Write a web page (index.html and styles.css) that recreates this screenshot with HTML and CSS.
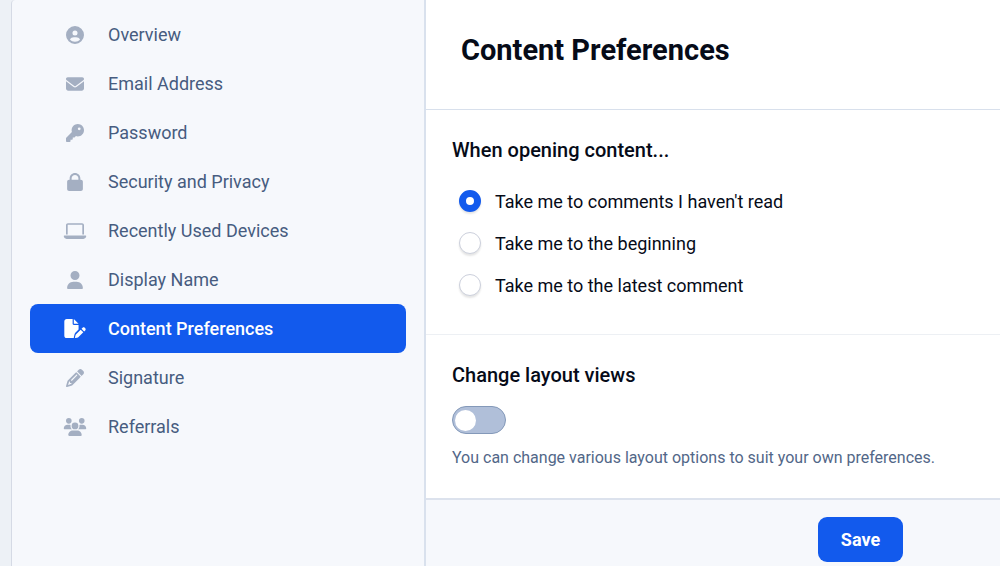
FILE: index.html
```html
<!DOCTYPE html>
<html lang="en">
<head>
<meta charset="utf-8">
<meta name="viewport" content="width=device-width, initial-scale=1">
<title>Content Preferences</title>
<link rel="stylesheet" href="styles.css">
</head>
<body>
<div class="settings">
  <nav class="sidebar" aria-label="Settings">
    <a class="nav-link" href="#overview"><svg class="icon" viewBox="0 0 512 512" aria-hidden="true"><path fill-rule="evenodd" d="M399 384.2C376.900 345.800 335.400 320 288 320H224c-47.400 0-88.900 25.800-111 64.200c35.200 39.200 86.200 63.800 143 63.800s107.800-24.700 143-63.800zM0 256a256 256 0 1 1 512 0A256 256 0 1 1 0 256zm256 16a72 72 0 1 0 0-144 72 72 0 1 0 0 144z"/></svg>Overview</a>
    <a class="nav-link" href="#email"><svg class="icon" viewBox="0 0 512 512" aria-hidden="true"><path d="M48 64C21.500 64 0 85.500 0 112c0 15.100 7.100 29.300 19.200 38.400L236.800 313.600c11.400 8.500 27 8.500 38.400 0L492.800 150.400c12.100-9.100 19.200-23.300 19.200-38.400c0-26.500-21.500-48-48-48H48zM0 176V384c0 35.300 28.700 64 64 64H448c35.300 0 64-28.700 64-64V176L294.400 339.200c-22.800 17.100-54 17.100-76.800 0L0 176z"/></svg>Email Address</a>
    <a class="nav-link" href="#password"><svg class="icon" viewBox="0 0 512 512" aria-hidden="true"><path fill-rule="evenodd" d="M336 352c97.200 0 176-78.800 176-176S433.200 0 336 0S160 78.800 160 176c0 18.700 2.900 36.800 8.300 53.700L7 391c-4.500 4.500-7 10.600-7 17v80c0 13.300 10.700 24 24 24h80c13.300 0 24-10.700 24-24V448h40c13.300 0 24-10.700 24-24V384h40c6.400 0 12.500-2.500 17-7l33.300-33.300c16.900 5.400 35 8.300 53.700 8.300zM376 96a40 40 0 1 1 0 80 40 40 0 1 1 0-80z"/></svg>Password</a>
    <a class="nav-link" href="#security"><svg class="icon" viewBox="0 0 448 512" aria-hidden="true"><path fill-rule="evenodd" d="M392 192h-16v-40C376 68.200 307.800 0 224 0S72 68.200 72 152v40H56c-30.900 0-56 25.100-56 56v208c0 30.900 25.100 56 56 56h336c30.900 0 56-25.100 56-56V248c0-30.900-25.100-56-56-56zm-72 0H128v-40c0-53 43-96 96-96s96 43 96 96v40z"/></svg>Security and Privacy</a>
    <a class="nav-link" href="#devices"><svg class="icon" viewBox="0 0 640 512" aria-hidden="true"><path d="M120 32C89 32 64 57 64 88V352h48V88c0-4 4-8 8-8H520c4 0 8 4 8 8V352h48V88c0-31-25-56-56-56H120zM16 384C7 384 0 391 0 400C0 444 36 480 80 480H560c44 0 80-36 80-80c0-9-7-16-16-16H16z"/></svg>Recently Used Devices</a>
    <a class="nav-link" href="#name"><svg class="icon" viewBox="0 0 448 512" aria-hidden="true"><path d="M224 256A128 128 0 1 0 224 0a128 128 0 1 0 0 256zm-45.700 48C79.800 304 0 383.800 0 482.300C0 498.700 13.300 512 29.700 512H418.300c16.400 0 29.700-13.300 29.700-29.700C448 383.800 368.200 304 269.700 304H178.300z"/></svg>Display Name</a>
    <a class="nav-link nav-link-active" href="#content" aria-current="page"><svg class="icon" viewBox="0 0 576 512" aria-hidden="true"><path d="M0 64C0 28.700 28.700 0 64 0H224V128c0 17.700 14.300 32 32 32H384V285.700l-86.800 86.800c-10.300 10.300-17.500 23.100-21 37.200l-18.700 74.900c-2.300 9.200-1.800 18.800 1.300 27.500H64c-35.300 0-64-28.700-64-64V64zm384 64H256V0L384 128zM549.800 235.700l14.400 14.400c15.600 15.600 15.600 40.900 0 56.600l-29.400 29.400-71-71 29.400-29.400c15.600-15.600 40.900-15.600 56.600 0zM311.900 417L441.100 287.800l71 71L382.900 487.900c-4.100 4.100-9.200 7-14.900 8.400l-60.100 15c-5.500 1.400-11.200-.2-15.200-4.200s-5.600-9.700-4.200-15.200l15-60.100c1.400-5.600 4.300-10.800 8.400-14.900z"/></svg>Content Preferences</a>
    <a class="nav-link" href="#signature"><svg class="icon" viewBox="0 0 512 512" aria-hidden="true"><path fill-rule="evenodd" d="M410.300 231l11.300-11.300-33.900-33.900-62.100-62.100L291.700 89.800l-11.300 11.300-22.600 22.600L58.600 322.900c-10.400 10.400-18 23.300-22.200 37.400L1 480.700c-2.500 8.400-.2 17.500 6.100 23.700s15.300 8.500 23.700 6.100l120.300-35.400c14.100-4.200 27-11.800 37.400-22.200L387.700 253.700 410.300 231zM160 399.400l-9.100 22.700c-4 3.100-8.500 5.400-13.300 6.900L59.400 452l23-78.100c1.400-4.900 3.800-9.400 6.900-13.300l22.700-9.100v32c0 8.800 7.200 16 16 16h32zM362.700 18.700L348.300 33.200 325.700 55.800 314.300 67.100l33.900 33.900 62.100 62.100 33.900 33.900 11.300-11.300 22.600-22.600 14.500-14.500c25-25 25-65.500 0-90.500L453.300 18.700c-25-25-65.500-25-90.500 0zm-47.400 168l-144 144c-6.200 6.200-16.400 6.200-22.600 0s-6.200-16.400 0-22.600l144-144c6.200-6.200 16.400-6.200 22.600 0s6.200 16.400 0 22.600z"/></svg>Signature</a>
    <a class="nav-link" href="#referrals"><svg class="icon" viewBox="0 0 640 512" aria-hidden="true"><path d="M144 0a80 80 0 1 1 0 160A80 80 0 1 1 144 0zM512 0a80 80 0 1 1 0 160A80 80 0 1 1 512 0zM0 298.700C0 239.800 47.800 192 106.700 192h42.700c15.900 0 31 3.500 44.600 9.700c-1.300 7.200-1.900 14.700-1.900 22.300c0 38.200 16.800 72.500 43.300 96H21.300C9.600 320 0 310.400 0 298.700zM404.600 320c26.600-23.500 43.300-57.800 43.300-96c0-7.600-.7-15-1.900-22.300c13.600-6.300 28.700-9.700 44.600-9.700h42.700C592.200 192 640 239.800 640 298.700c0 11.800-9.600 21.300-21.300 21.300H404.600zM224 224a96 96 0 1 1 192 0 96 96 0 1 1-192 0zM128 485.300C128 411.700 187.700 352 261.300 352H378.700C452.300 352 512 411.700 512 485.300c0 14.700-11.900 26.700-26.700 26.700H154.700c-14.700 0-26.700-11.900-26.700-26.700z"/></svg>Referrals</a>
  </nav>
  <main class="panel">
    <header class="panel-header"><h1 class="title">Content Preferences</h1></header>
    <form class="form">
      <fieldset class="section opening">
        <legend class="heading">When opening content...</legend>
        <div class="options">
          <label class="option"><input class="radio" type="radio" name="opening" checked>Take me to comments I haven't read</label>
          <label class="option"><input class="radio" type="radio" name="opening">Take me to the beginning</label>
          <label class="option"><input class="radio" type="radio" name="opening">Take me to the latest comment</label>
        </div>
      </fieldset>
      <div class="section layout">
        <label class="heading" for="layout-views">Change layout views</label>
        <input class="toggle" type="checkbox" id="layout-views" role="switch" aria-describedby="layout-help">
        <p class="help" id="layout-help">You can change various layout options to suit your own preferences.</p>
      </div>
      <footer class="actions"><button class="save" type="submit">Save</button></footer>
    </form>
  </main>
</div>
</body>
</html>
```
FILE: styles.css
```css
* {
  box-sizing: border-box;
}

body {
  margin: 0;
  padding-left: 11px;
  background: #edf1f6;
  color: #060b18;
  font-family: Roboto, "Liberation Sans", sans-serif;
  font-size: 18px;
}

.settings {
  display: grid;
  grid-template-columns: minmax(240px, 414px) 1fr;
  min-height: 100vh;
  border-left: 1px solid #d5dae5;
  border-top-left-radius: 4px;
  background: #f6f8fc;
}

.sidebar {
  display: flex;
  flex-direction: column;
  padding: 10px 18px;
  border-right: 2px solid #d9e1ed;
}

.nav-link {
  display: flex;
  align-items: center;
  gap: 21px;
  height: 49px;
  padding: 0 33px;
  border-radius: 8px;
  color: #475c80;
  text-decoration: none;
}

.icon {
  flex: none;
  width: 24px;
  height: 18px;
  fill: #a4afc2;
}

.nav-link-active {
  background: #125aed;
  color: #fff;
  font-weight: 500;
}

.nav-link-active .icon {
  height: 19px;
  fill: #fff;
}

.panel {
  min-width: 0;
  background: #fff;
}

.panel-header {
  padding: 32px 35px 41px;
  border-bottom: 1px solid #d8e0ec;
}

.title {
  margin: 0;
  font-size: 29px;
  font-weight: 700;
  line-height: 36px;
}

.form {
  display: flex;
  flex-direction: column;
}

.section {
  min-width: 0;
  margin: 0;
  padding: 27px 26px 28px;
  border: 0;
}

.opening {
  border-bottom: 1px solid #edf0f4;
}

.heading {
  display: block;
  padding: 0;
  font-size: 20px;
  font-weight: 500;
  line-height: 26px;
}

.opening .heading {
  float: left;
  width: 100%;
}

.options {
  display: grid;
  clear: both;
  padding-top: 17px;
}

.option {
  display: flex;
  align-items: center;
  gap: 14px;
  height: 42px;
  padding-left: 7px;
}

.radio {
  appearance: none;
  flex: none;
  width: 22px;
  height: 22px;
  margin: 0;
  border: 1px solid #ccd0dc;
  border-radius: 50%;
  background: #fff;
  box-shadow: 0 2px 2px #0000001a;
}

.radio:checked {
  border: 7px solid #125aed;
}

.toggle {
  appearance: none;
  display: flex;
  align-items: center;
  width: 54px;
  height: 28px;
  margin: 18px 0 0;
  padding: 0 2px;
  border: 1px solid #8499b9;
  border-radius: 14px;
  background: #b0bfd9;
}

.toggle::before {
  content: "";
  width: 21px;
  height: 21px;
  border-radius: 50%;
  background: #fff;
}

.toggle:checked {
  justify-content: flex-end;
  background: #125aed;
}

.help {
  margin: 12px 0 0;
  color: #526788;
  font-size: 16px;
  line-height: 24px;
}

.actions {
  display: flex;
  justify-content: flex-end;
  padding: 17px 97px 16px 26px;
  border-top: 2px solid #dce2ed;
  background: #f6f8fc;
}

.save {
  min-width: 85px;
  height: 45px;
  padding: 0 22px;
  border: 0;
  border-radius: 9px;
  background: #125aed;
  color: #fff;
  font: inherit;
  font-weight: 700;
}
```
